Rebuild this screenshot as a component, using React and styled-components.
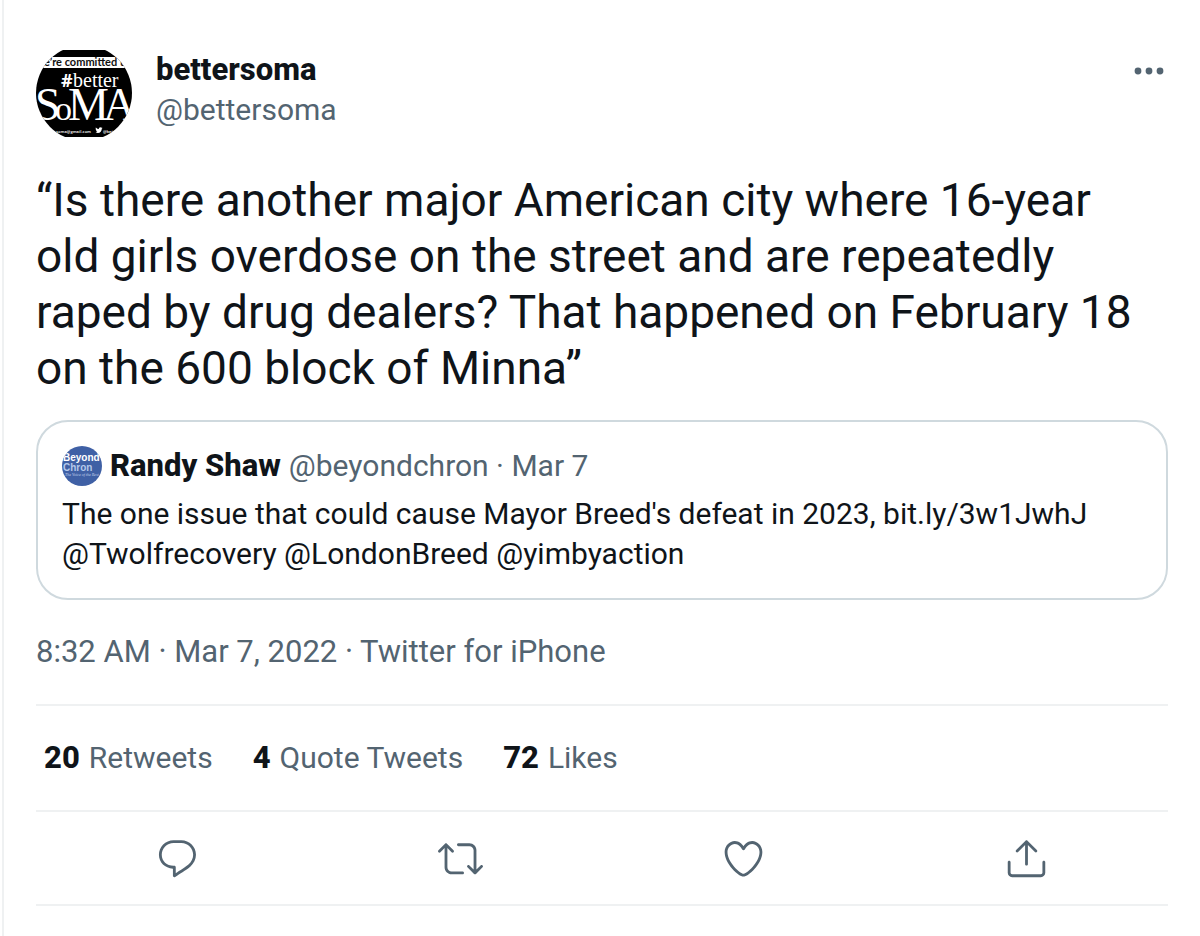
import React from "react";
import styled, { createGlobalStyle } from "styled-components";

const ink = "#0f1419";
const muted = "#536471";
const hairline = "#eff1f2";

const GlobalStyle = createGlobalStyle`
  *, *::before, *::after { box-sizing: border-box; }
  body {
    margin: 0;
    background: #fff;
    color: ${ink};
    font-family: Roboto, "Liberation Sans", sans-serif;
    font-size: 30px;
    line-height: 40px;
  }
`;

const Tweet = styled.article`
  min-height: 100vh;
  margin-left: 2px;
  padding: 45px 32px 0;
  border-left: 2px solid ${hairline};
`;

const Header = styled.header`
  display: flex;
  align-items: flex-start;
  gap: 24px;
`;

const Avatar = styled.svg`
  display: block;
  flex: none;
  width: ${({ $size }) => $size}px;
  height: ${({ $size }) => $size}px;
  border-radius: 50%;
`;

const Names = styled.div`
  display: flex;
  flex: 1;
  flex-direction: column;
  align-items: flex-start;
  padding-top: 5px;
`;

const NameLink = styled.a`
  color: ${ink};
  font-size: 31px;
  font-weight: 800;
  text-decoration: none;
`;

const MutedLink = styled.a`
  color: ${muted};
  text-decoration: none;
`;

const IconButton = styled.button`
  display: flex;
  align-items: center;
  justify-content: center;
  padding: 0;
  border: 0;
  background: none;
  color: ${muted};
  cursor: pointer;
`;

const MoreButton = styled(IconButton)`
  width: 38px;
  height: 52px;
`;

const Icon = styled.svg`
  display: block;
  width: ${({ $size }) => $size}px;
  height: ${({ $size }) => $size}px;
  fill: currentColor;
`;

const Message = styled.p`
  margin: 31px 0 24px;
  padding-right: 16px;
  font-size: 46px;
  line-height: 56px;
`;

const QuoteCard = styled.section`
  padding: 24px;
  border: 2px solid #cfd9de;
  border-radius: 32px;
`;

const QuoteHeader = styled.div`
  display: flex;
  align-items: center;
  gap: 8px;
`;

const QuoteText = styled.p`
  margin: 8px 0 0;
`;

const Meta = styled.div`
  margin: 32px 0;
  color: ${muted};
  font-size: 31px;
`;

const Stats = styled.div`
  display: flex;
  flex-wrap: wrap;
  gap: 40px;
  padding: 32px 8px;
  border-top: 2px solid ${hairline};
`;

const StatLink = styled(MutedLink)`
  display: flex;
  gap: 9px;
`;

const Count = styled.strong`
  color: ${ink};
  font-size: 31px;
  font-weight: 800;
`;

const Actions = styled.div`
  display: flex;
  padding: 24px 0;
  border-top: 2px solid ${hairline};
  border-bottom: 2px solid ${hairline};
`;

const ActionButton = styled(IconButton)`
  flex: 1;
  height: 44px;
`;

const stats = [
  ["20", "Retweets"],
  ["4", "Quote Tweets"],
  ["72", "Likes"],
];

const actions = [
  {
    label: "Reply",
    paths: [
      "M14.046 2.242l-4.148-.01h-.002c-4.374 0-7.8 3.427-7.8 7.802 0 4.098 3.186 7.206 7.465 7.37v3.828c0 .108.044.286.12.403.142.225.384.347.632.347.138 0 .277-.038.402-.118.264-.168 6.473-4.14 8.088-5.506 1.902-1.61 3.04-3.97 3.043-6.312v-.017c-.006-4.367-3.43-7.787-7.8-7.788zm3.787 12.972c-1.134.96-4.862 3.405-6.772 4.643V16.67c0-.414-.335-.75-.75-.75h-.396c-3.66 0-6.318-2.476-6.318-5.886 0-3.534 2.768-6.302 6.3-6.302l4.147.01h.002c3.532 0 6.3 2.766 6.302 6.296-.003 1.91-.942 3.844-2.514 5.176z",
    ],
  },
  {
    label: "Retweet",
    paths: [
      "M23.77 15.67c-.292-.293-.767-.293-1.06 0l-2.22 2.22V7.65c0-2.068-1.683-3.75-3.75-3.75h-5.85c-.414 0-.75.336-.75.75s.336.75.75.75h5.85c1.24 0 2.25 1.01 2.25 2.25v10.24l-2.22-2.22c-.293-.293-.768-.293-1.06 0s-.294.768 0 1.06l3.5 3.5c.145.147.337.22.53.22s.383-.072.53-.22l3.5-3.5c.294-.292.294-.767 0-1.06zm-10.66 3.28H7.26c-1.24 0-2.25-1.01-2.25-2.25V6.46l2.22 2.22c.148.147.34.22.532.22s.384-.073.53-.22c.293-.293.293-.768 0-1.06l-3.5-3.5c-.293-.294-.768-.294-1.06 0l-3.5 3.5c-.294.292-.294.767 0 1.06s.767.293 1.06 0l2.22-2.22V16.7c0 2.068 1.683 3.75 3.75 3.75h5.85c.414 0 .75-.336.75-.75s-.337-.75-.75-.75z",
    ],
  },
  {
    label: "Like",
    paths: [
      "M12 21.638h-.014C9.403 21.59 1.95 14.856 1.95 8.478c0-3.064 2.525-5.754 5.403-5.754 2.29 0 3.83 1.58 4.646 2.73.814-1.148 2.354-2.73 4.645-2.73 2.88 0 5.404 2.69 5.404 5.755 0 6.376-7.454 13.11-10.037 13.157H12zM7.354 4.225c-2.08 0-3.903 1.988-3.903 4.255 0 5.74 7.034 11.596 8.55 11.658 1.518-.062 8.55-5.917 8.55-11.658 0-2.267-1.823-4.255-3.903-4.255-2.528 0-3.94 2.936-3.952 2.965-.23.562-1.156.562-1.387 0-.014-.03-1.425-2.965-3.954-2.965z",
    ],
  },
  {
    label: "Share",
    paths: [
      "M17.53 7.47l-5-5c-.293-.293-.768-.293-1.06 0l-5 5c-.294.293-.294.768 0 1.06s.767.294 1.06 0l3.72-3.72V15c0 .414.336.75.75.75s.75-.336.75-.75V4.81l3.72 3.72c.146.147.338.22.53.22s.384-.072.53-.22c.293-.293.293-.767 0-1.06z",
      "M19.708 21.944H4.292C3.028 21.944 2 20.916 2 19.652V14c0-.414.336-.75.75-.75s.75.336.75.75v5.652c0 .437.355.792.792.792h15.416c.437 0 .792-.355.792-.792V14c0-.414.336-.75.75-.75s.75.336.75.75v5.652c0 1.264-1.028 2.292-2.292 2.292z",
    ],
  },
];

function SomaAvatar() {
  return (
    <Avatar $size={96} viewBox="0 0 96 96" role="img" aria-label="bettersoma">
      <rect y="5" width="96" height="87" fill="#000" />
      <rect y="12" width="96" height="11" fill="#fff" />
      <text x="48" y="21" textAnchor="middle" fontFamily="Lato, sans-serif" fontSize="11" fontWeight="700" fill="#111">
        e’re committed t
      </text>
      <g fill="#fff" fontFamily="Liberation Serif, serif">
        <text x="25" y="42" fontFamily="Open Sans, sans-serif" fontSize="18" fontWeight="700">#</text>
        <text x="37" y="42" fontSize="20">better</text>
        <g fontSize="46">
          <text x="-1" y="75">S</text>
          <text x="19" y="75" fontSize="34">o</text>
          <text x="32" y="75">M</text>
          <text x="67" y="75">A</text>
        </g>
      </g>
      <text x="20" y="88" fontFamily="Open Sans, sans-serif" fontSize="4" fontWeight="700" fill="#ddd">
        soma@gmail.com
      </text>
      <path
        d="M59.5 87.3c1 .1 1.6-.2 2-.5-.7 0-1.1-.5-1.3-1h.6c-.8-.3-1.1-.8-1.1-1.5l.6.2c-.7-.6-.8-1.3-.4-2 .9 1 1.9 1.5 3 1.6-.2-1.2.6-1.9 1.4-1.9.5 0 .9.2 1.1.5l.9-.4-.5.9.8-.2-.8.8c.1 3-3 5.6-6.3 3.5z"
        fill="#fff"
      />
      <text x="67" y="88" fontFamily="Open Sans, sans-serif" fontSize="4" fontWeight="700" fill="#ddd">
        @bet
      </text>
    </Avatar>
  );
}

function ChronAvatar() {
  return (
    <Avatar $size={40} viewBox="0 0 40 40" role="img" aria-label="Beyond Chron">
      <rect width="40" height="40" fill="#3f60a5" />
      <g fontFamily="Liberation Sans, sans-serif" fontSize="10" fontWeight="700">
        <text x="1" y="15" fill="#fff">Beyond</text>
        <text x="1" y="25" fill="#b4c8ea">Chron</text>
      </g>
      <text x="3" y="30" fontFamily="Liberation Serif, serif" fontStyle="italic" fontSize="4" fill="#c6d3ec">
        The Voice of the Rest
      </text>
    </Avatar>
  );
}

export default function App() {
  return (
    <>
      <GlobalStyle />
      <Tweet>
        <Header>
          <SomaAvatar />
          <Names>
            <NameLink href="#profile">bettersoma</NameLink>
            <MutedLink href="#profile">@bettersoma</MutedLink>
          </Names>
          <MoreButton type="button" aria-label="More">
            <Icon $size={38} viewBox="0 0 38 38">
              <circle cx="8" cy="19" r="3.4" />
              <circle cx="19" cy="19" r="3.4" />
              <circle cx="30" cy="19" r="3.4" />
            </Icon>
          </MoreButton>
        </Header>

        <Message>
          “Is there another major American city where 16-year old girls overdose on the street and are
          repeatedly raped by drug dealers? That happened on February 18 on the 600 block of Minna”
        </Message>

        <QuoteCard>
          <QuoteHeader>
            <ChronAvatar />
            <NameLink href="#quoted">Randy Shaw</NameLink>
            <MutedLink href="#quoted">@beyondchron · Mar 7</MutedLink>
          </QuoteHeader>
          <QuoteText>
            The one issue that could cause Mayor Breed's defeat in 2023, bit.ly/3w1JwhJ
            <br />
            @Twolfrecovery @LondonBreed @yimbyaction
          </QuoteText>
        </QuoteCard>

        <Meta>8:32 AM · Mar 7, 2022 · Twitter for iPhone</Meta>

        <Stats>
          {stats.map(([count, label]) => (
            <StatLink key={label} href={`#${label}`}>
              <Count>{count}</Count>
              <span>{label}</span>
            </StatLink>
          ))}
        </Stats>

        <Actions>
          {actions.map(({ label, paths }) => (
            <ActionButton key={label} type="button" aria-label={label}>
              <Icon $size={45} viewBox="0 0 24 24">
                {paths.map((d) => (
                  <path key={d} d={d} />
                ))}
              </Icon>
            </ActionButton>
          ))}
        </Actions>
      </Tweet>
    </>
  );
}
